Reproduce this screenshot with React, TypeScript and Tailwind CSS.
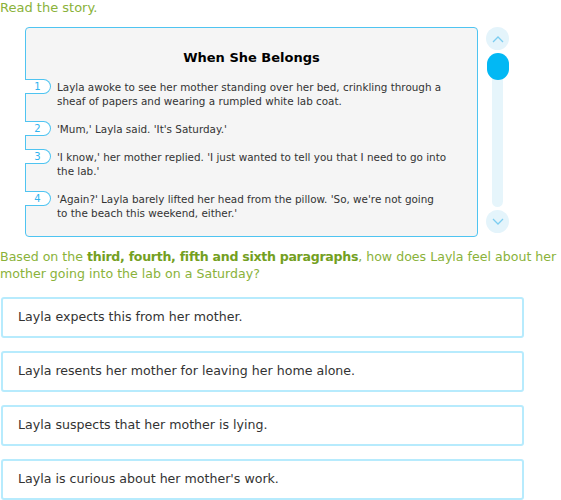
const paragraphs = [
  "Layla awoke to see her mother standing over her bed, crinkling through a sheaf of papers and wearing a rumpled white lab coat.",
  "'Mum,' Layla said. 'It's Saturday.'",
  "'I know,' her mother replied. 'I just wanted to tell you that I need to go into the lab.'",
  "'Again?' Layla barely lifted her head from the pillow. 'So, we're not going to\u00a0the beach this weekend, either.'",
];

const choices = [
  "Layla expects this from her mother.",
  "Layla resents her mother for leaving her home alone.",
  "Layla suspects that her mother is lying.",
  "Layla is curious about her mother's work.",
];

const Chevron = ({ up }: { up?: boolean }) => (
  <svg width="12" height="8" viewBox="0 0 12 8" fill="none">
    <path
      d={up ? "M1 7 L6 2 L11 7" : "M1 1 L6 6 L11 1"}
      stroke="#7ccdf0"
      strokeWidth="1.3"
    />
  </svg>
);

const App = () => {
  return (
    <main className="w-[561px] h-[500px] bg-white font-['DejaVu_Sans',Verdana,sans-serif] overflow-hidden">
      <p className="text-[13px] leading-[15px] text-[#8ab23a]">Read the story.</p>

      <section className="flex mt-[12px]">
        <div className="ml-[25px] w-[453px] h-[210px] border border-[#4fc4f1] rounded-[4px] bg-[#f5f5f5] pt-[21px] pr-[27px]">
          <h2 className="text-center text-[13px] leading-[18px] font-bold text-black pl-[27px]">
            When She Belongs
          </h2>
          <div className="mt-[13px] flex flex-col gap-[14px]">
            {paragraphs.map((text, i) => (
              <div key={i} className="flex">
                <span className="shrink-0 -ml-px mt-[-1px] w-[26px] h-[15px] border border-l-0 border-[#4fc4f1] rounded-r-[8px] bg-white text-[#2fb4ef] text-[10px] leading-[13px] text-center">
                  {i + 1}
                </span>
                <p className="ml-[6px] text-[10.4px] leading-[14px] text-[#333]">{text}</p>
              </div>
            ))}
          </div>
        </div>

        <div className="ml-[8px] w-[23px] flex flex-col items-center">
          <div className="w-[23px] h-[23px] rounded-full bg-[#e4f4fb] flex items-center justify-center">
            <Chevron up />
          </div>
          <div className="mt-[3px] w-[11px] h-[154px] rounded-full bg-[#e6f5fb] flex justify-center">
            <div className="w-[22px] h-[27px] shrink-0 rounded-full bg-[#02b8f4]" />
          </div>
          <div className="mt-[3px] w-[23px] h-[23px] rounded-full bg-[#e4f4fb] flex items-center justify-center">
            <Chevron />
          </div>
        </div>
      </section>

      <p className="mt-[11px] text-[12.6px] leading-[17px] text-[#8ab23a]">
        Based on the <b className="text-[#74a01f] tracking-[-0.3px]">third, fourth, fifth and sixth paragraphs</b>, how does Layla feel about her mother going into the lab on a Saturday?
      </p>

      <div className="mt-[15px] flex flex-col gap-[13px]">
        {choices.map((c) => (
          <div
            key={c}
            className="ml-px w-[523px] h-[41px] border-2 border-[#b7ebfd] rounded-[3px] flex items-center pl-[15px] text-[12.6px] text-[#333]"
          >
            {c}
          </div>
        ))}
      </div>
    </main>
  );
};

export default App;
